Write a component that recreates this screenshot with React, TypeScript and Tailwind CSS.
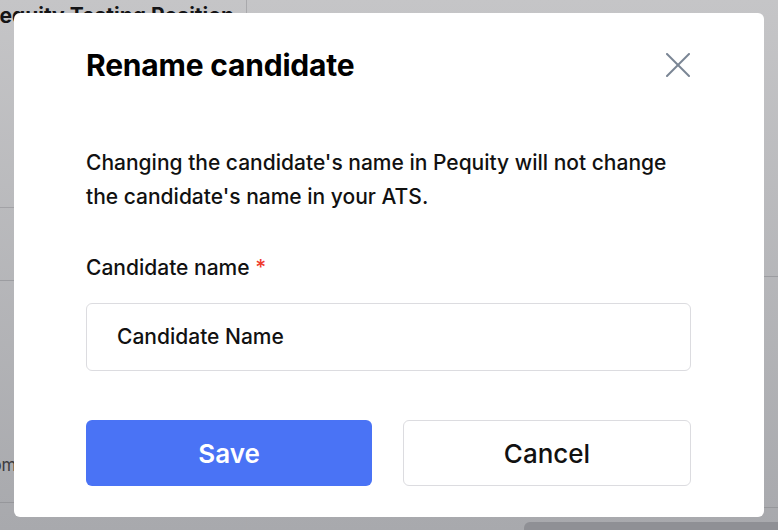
import React from 'react';

const CloseIcon: React.FC = () => (
  <svg width="24" height="24" viewBox="0 0 24 24" fill="none" stroke="currentColor" strokeWidth="2" strokeLinecap="round">
    <path d="M1 1 23 23" />
    <path d="M23 1 1 23" />
  </svg>
);

export default function App() {
  return (
    <div className="relative h-[530px] w-[778px] overflow-hidden bg-gradient-to-b from-[#c5c5c7] to-[#a8a9ad] font-['Inter',sans-serif] text-black">
      {/* page behind the dialog, already dimmed */}
      <div className="flex h-full">
        <div className="flex w-[247px] flex-col border-r border-[#a9a9ac]">
          <div className="-ml-[14px] h-[40px] whitespace-nowrap pt-[2px] text-[21px] font-bold leading-[28px] text-[#141416]">
            Pequity Testing Position
          </div>
          <div className="h-[168px] border-b border-[#a2a2a6]" />
          <div className="h-[73px] border-b border-[#9c9da1]" />
          <div className="flex h-[222px] flex-col justify-end border-b border-[#96979b] pb-[24px]">
            <span className="-ml-[21px] whitespace-nowrap text-[17px] text-[#3c3c40]">Comp</span>
          </div>
        </div>
        <div className="flex flex-1 flex-col">
          <div className="h-[277px] border-b border-[#9c9da1]" />
          <div className="h-[231px] border-b border-[#96979b]" />
          <div className="flex flex-1 justify-end">
            <div className="mt-[14px] w-[254px] rounded-tl-[6px] bg-[#8f9095]" />
          </div>
        </div>
      </div>

      {/* dialog */}
      <div className="absolute left-[14px] top-[13px] flex h-[504px] w-[750px] flex-col rounded-[6px] bg-white pl-[72px] pr-[73px] pt-[34px]">
        <div className="flex items-center justify-between">
          <h2 className="text-[30px] font-bold leading-[36px] tracking-[-0.2px]">Rename candidate</h2>
          <button className="mr-[1px] text-[#7a8594]">
            <CloseIcon />
          </button>
        </div>

        <p className="mt-[63px] text-[21px] font-medium leading-[34px] text-[#111]">
          Changing the candidate's name in Pequity will not change
          <br />
          the candidate's name in your ATS.
        </p>

        <label className="mt-[39px] text-[21px] font-medium leading-[30px] text-[#111]">
          Candidate name <span className="text-[#ef3b2d]">*</span>
        </label>

        <div className="mt-[20px] flex h-[68px] items-center rounded-[6px] border border-[#dcdce0] px-[30px] text-[21px] font-medium text-[#111]">
          Candidate Name
        </div>

        <div className="mt-[49px] flex gap-[31px]">
          <button className="h-[66px] flex-1 rounded-[6px] bg-[#4a73f5] text-[26px] font-semibold text-white">
            Save
          </button>
          <button className="h-[66px] flex-1 rounded-[6px] border border-[#dcdce0] bg-white text-[26px] font-medium text-[#111]">
            Cancel
          </button>
        </div>
      </div>
    </div>
  );
}
